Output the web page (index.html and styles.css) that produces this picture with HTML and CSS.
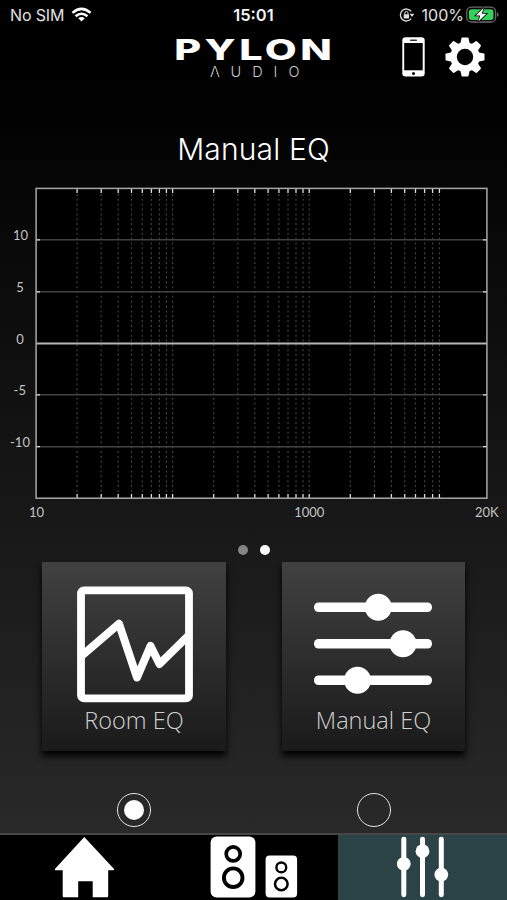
FILE: index.html
```html
<!DOCTYPE html>
<html lang="en">
<head>
<meta charset="utf-8">
<title>Manual EQ</title>
<link rel="stylesheet" href="styles.css">
</head>
<body>
<div class="app">
  <div class="status">
    <div class="status-left"><span>No SIM</span>
      <svg width="21" height="16" viewBox="0 0 21 16" fill="none" stroke="#fff" stroke-width="2.6"><path d="M1.4 5.9Q10.5-2.2 19.6 5.9"/><path d="M4.6 9.3Q10.5 4.2 16.4 9.3"/><path d="M7.2 11.2Q10.5 8.7 13.8 11.2L10.5 14.6Z" fill="#fff" stroke="none"/></svg>
    </div>
    <div class="clock">15:01</div>
    <div class="status-right">
      <svg class="lock" width="16" height="14" viewBox="0 0 16 14"><path d="M12.2 3.4A6 6 0 1 0 12.2 10.6" fill="none" stroke="#ddd" stroke-width="1.3"/><path d="M10.6 5.8H15.4L13 9Z" fill="#ddd"/><rect x="4.7" y="6.2" width="5.4" height="4.2" rx=".6" fill="#ddd"/><path d="M5.8 6.5V5a1.6 1.6 0 0 1 3.2 0v1.5" fill="none" stroke="#ddd"/></svg>
      <span>100%</span>
      <svg class="battery" width="33" height="18" viewBox="0 0 33 18"><rect x=".8" y="1.2" width="28.8" height="14.8" rx="4.6" fill="none" stroke="#6b6b6b" stroke-width="1.3"/><rect x="2.9" y="3.3" width="24.6" height="10.6" rx="2.6" fill="#35cf5b"/><path d="M31 6.3v4.6q1.7-.6 1.7-2.3T31 6.3Z" fill="#6b6b6b"/><path d="M17.6 1.8L9.8 9.4H14.3L12.4 15.6L20.4 7.7H15.8Z" fill="#fff" stroke="#000" stroke-width="1.5" paint-order="stroke"/></svg>
    </div>
  </div>

  <header class="header">
    <svg class="brand" width="160" height="50" viewBox="0 0 160 50">
      <text class="brand-name" transform="translate(-.8 29.7) scale(1.45 1)">PYLON</text>
      <text class="brand-sub" x="35" y="47">AUDIO</text>
      <path d="M40 38.2L43.3 47.6H36.7Z" fill="#000"/>
    </svg>
    <svg class="phone" width="23" height="40" viewBox="0 0 23 40"><rect x=".3" y=".3" width="22.4" height="39.2" rx="3.3" fill="#fff"/><rect x="2.2" y="6" width="18.5" height="27.3" fill="#000"/><rect x="8" y="2.6" width="7" height="1.3" rx=".6" fill="#333"/><circle cx="11.5" cy="36.4" r="1.5" fill="#000"/></svg>
    <svg class="gear" width="40" height="40" viewBox="-20 -20 40 40" fill="#fff"><path id="tooth" d="M-5-12L-3.5-18.8Q-3.3-19.5-2.7-19.5H2.7Q3.3-19.5 3.5-18.8L5-12V12L3.5 18.8Q3.3 19.5 2.7 19.5H-2.7Q-3.3 19.5-3.5 18.8L-5 12Z"/><use href="#tooth" transform="rotate(45)"/><use href="#tooth" transform="rotate(90)"/><use href="#tooth" transform="rotate(135)"/><circle r="14.7"/><circle r="8.2" fill="#000"/></svg>
  </header>

  <h1 class="title">Manual EQ</h1>

  <svg class="chart" width="507" height="350" viewBox="0 180 507 350">
    <rect x="36" y="188.5" width="451" height="310" fill="#000"/>
    <path class="minor" d="M77.1 194V493M101.2 194V493M118.2 194V493M131.5 194V493M142.3 194V493M151.4 194V493M159.4 194V493M166.4 194V493M172.6 194V493M213.7 194V493M237.8 194V493M254.8 194V493M268.1 194V493M278.9 194V493M288 194V493M296 194V493M303 194V493M309.2 194V493M350.3 194V493M374.4 194V493M391.4 194V493M404.7 194V493M415.5 194V493M424.6 194V493M432.6 194V493M439.4 194V493"/>
    <path class="major" d="M36 239.8H487M36 291.8H487M36 394.8H487M36 446.7H487"/>
    <path class="ticks" d="M77.1 188v5M101.2 188v5M118.2 188v5M131.5 188v5M142.3 188v5M151.4 188v5M159.4 188v5M166.4 188v5M172.6 188v5M213.7 188v5M237.8 188v5M254.8 188v5M268.1 188v5M278.9 188v5M288 188v5M296 188v5M303 188v5M309.2 188v5M350.3 188v5M374.4 188v5M391.4 188v5M404.7 188v5M415.5 188v5M424.6 188v5M432.6 188v5M439.4 188v5"/>
    <path class="ticks" d="M77.1 494v4M101.2 494v4M118.2 494v4M131.5 494v4M142.3 494v4M151.4 494v4M159.4 494v4M166.4 494v4M172.6 494v4M213.7 494v4M237.8 494v4M254.8 494v4M268.1 494v4M278.9 494v4M288 494v4M296 494v4M303 494v4M309.2 494v4M350.3 494v4M374.4 494v4M391.4 494v4M404.7 494v4M415.5 494v4M424.6 494v4M432.6 494v4M439.4 494v4"/>
    <path class="ticks" d="M36 239.8h4M36 291.8h4M36 394.8h4M36 446.7h4M487 239.8h-4M487 291.8h-4M487 394.8h-4M487 446.7h-4"/>
    <path class="zero" d="M36 343.4H487"/>
    <rect class="frame" x="36.1" y="188.4" width="450.8" height="309.8"/>
    <g class="axis">
      <text x="20.5" y="240.3">10</text><text x="20" y="291.8">5</text><text x="20" y="343.6">0</text><text x="19.8" y="395">-5</text><text x="20" y="446.6">-10</text>
      <text x="36.5" y="516.6">10</text><text x="309.3" y="516.6">1000</text><text x="486.8" y="516.6">20K</text>
    </g>
  </svg>

  <div class="pager"><span class="dot"></span><span class="dot on"></span></div>

  <main class="choices">
    <section class="choice">
      <div class="card">
        <svg width="121" height="121" viewBox="74 582 121 121" fill="none" stroke="#fff"><rect x="81" y="590.4" width="108" height="108" rx="3" stroke-width="7.8"/><path d="M82 655.5L119 623.8L137 677.5L150.5 646L159.5 664L188 636" stroke-width="8" stroke-linejoin="round"/></svg>
        <span class="label">Room EQ</span>
      </div>
      <span class="radio checked"></span>
    </section>
    <section class="choice">
      <div class="card">
        <svg width="121" height="121" viewBox="0 0 121 121" fill="#fff"><rect x="1" y="20.4" width="118" height="9.6" rx="4.5"/><rect x="1" y="56.9" width="118" height="9.6" rx="4.5"/><rect x="1" y="93.4" width="118" height="9.6" rx="4.5"/><circle cx="65.3" cy="25.2" r="13.5"/><circle cx="90" cy="61.7" r="13.5"/><circle cx="44.5" cy="98.2" r="13.5"/></svg>
        <span class="label">Manual EQ</span>
      </div>
      <span class="radio"></span>
    </section>
  </main>

  <nav class="tabs">
    <div class="tab"><svg width="60" height="65" viewBox="0 0 60 65"><path d="M29.3 2L58.8 33.8Q59.5 35.2 58 35.2H53.2V61Q53.2 62.2 51.9 62.2H37.7V46.3H23.2V62.2H8.9Q7.7 62.2 7.7 61V35.2H1Q-.6 35.2.1 33.8Z" fill="#fff"/></svg></div>
    <div class="tab"><svg width="88" height="65" viewBox="0 0 88 65"><rect x=".6" y="1.4" width="44.8" height="61" rx="6" fill="#fff"/><rect x="55.6" y="20.4" width="31.5" height="42" rx="4" fill="#fff"/><g fill="none" stroke="#000"><circle cx="23.2" cy="18.9" r="7" stroke-width="3.7"/><circle cx="23.2" cy="42.7" r="9.3" stroke-width="3.9"/><circle cx="71.3" cy="32.4" r="4.9" stroke-width="2.4"/><circle cx="71.3" cy="49" r="6.3" stroke-width="2.5"/></g></svg></div>
    <div class="tab active"><svg width="52" height="65" viewBox="0 0 52 65" fill="#fff"><rect x="4.3" y="1.7" width="5" height="60.5" rx="2.4"/><rect x="23" y="1.7" width="5" height="60.5" rx="2.4"/><rect x="41.8" y="1.7" width="5" height="60.5" rx="2.4"/><circle cx="6.8" cy="28.8" r="6.9"/><circle cx="25.5" cy="16.2" r="6.9"/><circle cx="44.3" cy="39.6" r="6.9"/></svg></div>
  </nav>
</div>
</body>
</html>
```
FILE: styles.css
```css
* { box-sizing: border-box; }
body { margin: 0; background: #000; color: #fff; font-family: Inter, "Liberation Sans", sans-serif; }
svg { display: block; flex: none; }
.app {
  width: 507px; height: 900px; display: flex; flex-direction: column; overflow: hidden;
  background: linear-gradient(#000 80px, #292929 834px);
}
.status { height: 30px; display: grid; grid-template-columns: 1fr auto 1fr; align-items: center; padding: 0 8px 0 10px; font-size: 16px; line-height: 30px; color: #e0e0e0; }
.status-left { display: flex; align-items: center; gap: 7px; letter-spacing: -.15px; }
.clock { font-weight: 600; font-size: 16.5px; color: #f2f2f2; padding-right: 2px; }
.status-right { display: flex; align-items: center; justify-content: flex-end; }
.lock { margin-right: 7px; }
.battery { margin-left: 2px; }
.header { height: 55px; display: flex; align-items: flex-start; padding-left: 175px; }
.brand-name { font-family: Inter, sans-serif; font-weight: 800; font-size: 28.5px; letter-spacing: 2.4px; fill: #fff; }
.brand-sub { font-family: Inter, sans-serif; font-weight: 300; font-size: 14.5px; letter-spacing: 11px; fill: #ccc; }
.phone { margin: 7px 0 0 67px; }
.gear { margin: 7px 0 0 20px; }
.title { margin: 0; height: 95px; padding-top: 43.5px; text-align: center; font-size: 30px; line-height: 40px; font-weight: 300; letter-spacing: .15px; }
.chart { height: 350px; }
.minor { stroke: #404040; stroke-width: 1.2; stroke-dasharray: 2 2.85; fill: none; }
.major { stroke: #424242; stroke-width: 1.6; }
.ticks { stroke: #ddd; stroke-width: 1.3; }
.zero { stroke: #b5b5b5; stroke-width: 2; }
.frame { fill: none; stroke: #a8a8a8; stroke-width: 1.5; }
.axis { font-family: Lato, sans-serif; font-size: 13px; fill: #c4c4c4; text-anchor: middle; }
.pager { height: 32px; padding-top: 15px; padding-left: 238px; display: flex; gap: 12px; }
.dot { width: 10px; height: 10px; border-radius: 50%; background: #858585; }
.dot.on { background: #fff; }
.choices { display: flex; gap: 55px; padding-left: 42px; height: 271px; }
.choice { width: 184px; display: flex; flex-direction: column; align-items: center; }
.choice + .choice { margin-left: 1px; width: 183px; }
.card { width: 100%; height: 189px; padding-top: 20px; display: flex; flex-direction: column; align-items: center; background: linear-gradient(#414141, #1a1a1a); box-shadow: 0 5px 7px #000; }
.label { font-family: "Open Sans", sans-serif; font-weight: 300; font-size: 23.5px; line-height: 32px; margin-top: 1px; color: #d0d0d0; white-space: nowrap; }
.radio { width: 34px; height: 34px; margin-top: 41.5px; border: 1.7px solid #e4e4e4; border-radius: 50%; display: flex; align-items: center; justify-content: center; }
.radio.checked::after { content: ""; width: 20px; height: 20px; border-radius: 50%; background: #fff; }
.tabs { flex: 1; display: grid; grid-template-columns: repeat(3, 1fr); border-top: 2px solid #474747; background: #000; }
.tab { display: flex; justify-content: center; }
.tab.active { background: #2b4247; }
```
